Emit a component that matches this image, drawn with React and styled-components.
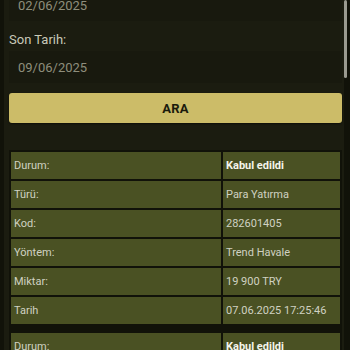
import React from 'react';
import styled, { createGlobalStyle } from 'styled-components';

const Global = createGlobalStyle`
  html, body {
    margin: 0;
    padding: 0;
    background: #111209;
    overflow: hidden;
  }
  body {
    font-family: Roboto, "Liberation Sans", sans-serif;
  }
`;

const Screen = styled.div`
  position: relative;
  width: 350px;
  height: 350px;
  overflow: hidden;
  padding: 0 6px 0 4px;
  box-sizing: border-box;
`;

const Panel = styled.div`
  background: #1b1c10;
  margin-top: -11px;
  padding: 0 2px 20px 5px;
  display: flex;
  flex-direction: column;
`;

const Label = styled.div`
  color: #c9c9b8;
  font-size: 13px;
  line-height: 16px;
  margin: 11px 0 3px;
`;

const DateInput = styled.div`
  height: 32px;
  display: flex;
  align-items: center;
  padding-left: 9px;
  color: #8e8e7c;
  font-size: 13px;
  background: #18190e;
`;

const Button = styled.button`
  margin-top: 10px;
  height: 30px;
  border: none;
  border-radius: 3px;
  background: #ccbc68;
  color: #1a1a0c;
  font-family: Roboto, "Liberation Sans", sans-serif;
  font-weight: 700;
  font-size: 13px;
  letter-spacing: 0.3px;
  box-shadow: 0 1px 2px rgba(0, 0, 0, 0.5);
`;

const List = styled.div`
  margin-top: 27px;
  background: #111209;
  display: flex;
  flex-direction: column;
  gap: 5px;
`;

const Table = styled.table`
  width: 100%;
  border-collapse: separate;
  border-spacing: 2px;
  background: #111209;
  table-layout: fixed;
`;

const Cell = styled.td`
  height: 27px;
  padding: 0 0 0 3px;
  background: #4a5123;
  color: ${p => (p.$strong ? '#f4f4ea' : '#d0d1c2')};
  font-weight: ${p => (p.$strong ? 700 : 400)};
  font-size: 11px;
  white-space: nowrap;
  overflow: hidden;
  box-sizing: border-box;
`;

const Scrollbar = styled.div`
  position: absolute;
  right: 3px;
  top: 0;
  width: 3px;
  height: 78px;
  border-radius: 2px;
  background: #9a9a90;
`;

const rows = [
  ['Durum:', 'Kabul edildi', true],
  ['Türü:', 'Para Yatırma'],
  ['Kod:', '282601405'],
  ['Yöntem:', 'Trend Havale'],
  ['Miktar:', '19 900 TRY'],
  ['Tarih', '07.06.2025 17:25:46'],
];

function Record({ items }) {
  return (
    <Table>
      <colgroup>
        <col style={{ width: 210 }} />
        <col />
      </colgroup>
      <tbody>
        {items.map(([k, v, strong]) => (
          <tr key={k}>
            <Cell>{k}</Cell>
            <Cell $strong={strong}>{v}</Cell>
          </tr>
        ))}
      </tbody>
    </Table>
  );
}

export default function App() {
  return (
    <>
      <Global />
      <Screen>
        <Panel>
          <DateInput>02/06/2025</DateInput>
          <Label>Son Tarih:</Label>
          <DateInput>09/06/2025</DateInput>
          <Button>ARA</Button>
          <List>
            <Record items={rows} />
            <Record items={rows} />
          </List>
        </Panel>
        <Scrollbar />
      </Screen>
    </>
  );
}
